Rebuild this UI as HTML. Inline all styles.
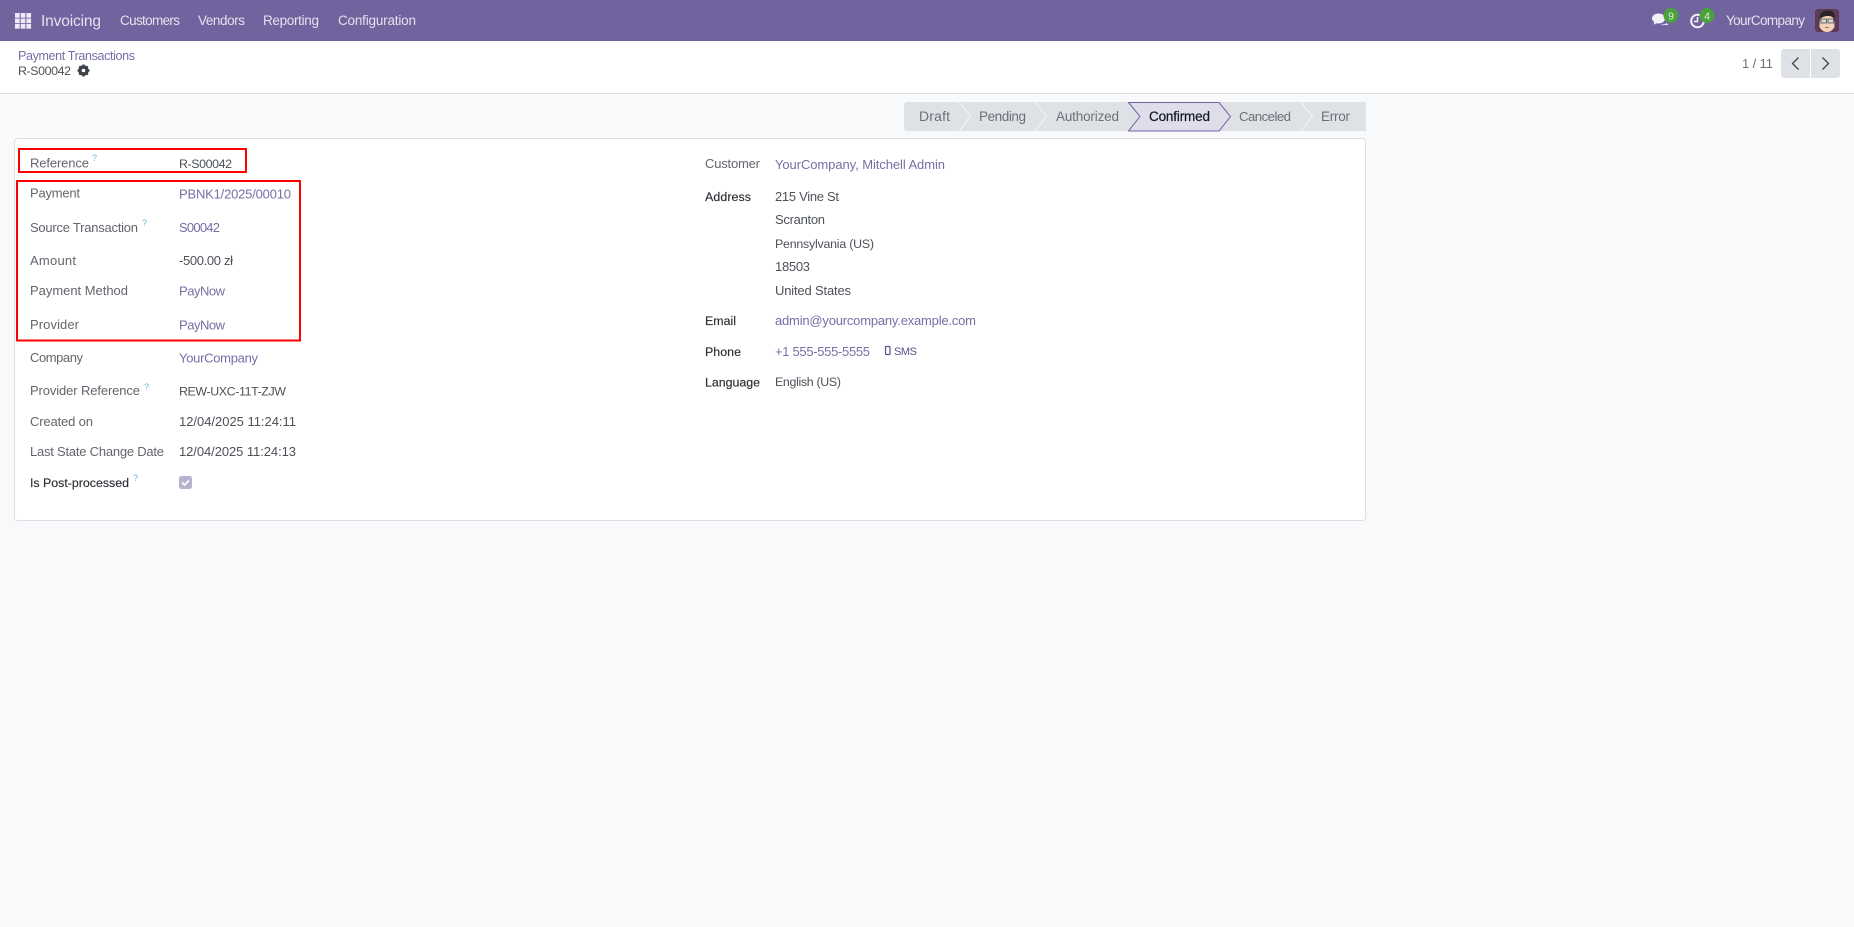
<!DOCTYPE html>
<html lang="en"><head><meta charset="utf-8"><title>R-S00042</title>
<style>
html,body{margin:0;padding:0;width:1854px;height:927px;overflow:hidden;background:#f8f9fa}
svg{display:block}
text{font-family:"Liberation Sans",sans-serif;font-size:13px}
.n{fill:#e4e1ee;font-size:13.5px}
.l{fill:#62666c}
.d{fill:#2a2e33;stroke:#2a2e33;stroke-width:.15px}
.v{fill:#4d5258}
.c{font-size:12.4px}
.a{fill:#7a6da5}
.s{fill:#6c7177}
.q{fill:#6eb4cc;font-size:9px}
</style></head><body>
<svg width="1854" height="927" viewBox="0 0 1854 927" xmlns="http://www.w3.org/2000/svg">
<rect width="1854" height="927" fill="#f8f9fa"/>
<rect width="1854" height="41" fill="#71639e"/>
<rect y="41" width="1854" height="52" fill="#fff"/>
<rect y="93" width="1854" height="1" fill="#dcdee2"/>

<!-- apps icon -->
<g fill="#eeeaf5">
<rect x="15" y="13" width="4.700" height="4.700"/><rect x="20.700" y="13" width="4.700" height="4.700"/><rect x="26.400" y="13" width="4.700" height="4.700"/>
<rect x="15" y="18.500" width="4.700" height="4.700"/><rect x="20.700" y="18.500" width="4.700" height="4.700"/><rect x="26.400" y="18.500" width="4.700" height="4.700"/>
<rect x="15" y="24" width="4.700" height="4.700"/><rect x="20.700" y="24" width="4.700" height="4.700"/><rect x="26.400" y="24" width="4.700" height="4.700"/>
</g>
<text x="41" y="26" textLength="60" style="fill:#e4e1ee;font-size:15.500px">Invoicing</text>
<text class="n" x="120" y="25" textLength="60">Customers</text>
<text class="n" x="198" y="25" textLength="47">Vendors</text>
<text class="n" x="263" y="25" textLength="56">Reporting</text>
<text class="n" x="338" y="25" textLength="78">Configuration</text>

<!-- systray -->
<path d="M1652 18.500c0-3 3-5 6.500-5s6.500 2 6.500 5-3 5-6.500 5c-.7 0-1.400-.1-2-.3l-3 1.600.8-2.800c-1.500-.9-2.300-2.100-2.300-3.500z" fill="#f3f1f8"/>
<path d="M1660 24.500c2.500.3 5 0 6.500-1.500l2 2.200-3.500-.3c-1.500.5-3.500.4-5-.4z" fill="#f3f1f8"/>
<circle cx="1671" cy="15.500" r="7.500" fill="#4aa13d"/>
<text x="1671" y="19.500" text-anchor="middle" style="fill:#dfeeda;font-size:10.500px">9</text>
<circle cx="1697.500" cy="21" r="6.300" fill="none" stroke="#f3f1f8" stroke-width="2"/>
<path d="M1697.500 17v4.500h-3.500" fill="none" stroke="#f3f1f8" stroke-width="1.500"/>
<circle cx="1707" cy="15.500" r="7.500" fill="#4aa13d"/>
<text x="1707" y="19.500" text-anchor="middle" style="fill:#dfeeda;font-size:10.500px">4</text>
<text class="n" x="1726" y="25" textLength="79">YourCompany</text>

<!-- avatar -->
<rect x="1815" y="9" width="24" height="23" rx="3" fill="#5d3a55"/>
<path d="M1819.500 27c0-9 1.500-12 7.500-12s7.500 3 7.500 12c-2 3.500-4.500 5-7.500 5s-5.500-1.500-7.500-5z" fill="#f3d2bb"/>
<path d="M1820 19c-1-5 2-8 5-8 3-1 9-1 9 3 1 2 1 3 0 5-1-2-3-3-6-3-3 0-6 1-8 3z" fill="#2a2327"/>
<rect x="1821" y="19" width="5.500" height="4" fill="#d5d8d8" stroke="#55504f" stroke-width=".8"/>
<rect x="1828" y="19" width="5.500" height="4" fill="#d5d8d8" stroke="#55504f" stroke-width=".8"/>
<path d="M1825 27.500h4" stroke="#b56b5e" stroke-width="1"/>

<!-- breadcrumb -->
<text class="a" x="18" y="60" textLength="117" style="font-size:12.500px">Payment Transactions</text>
<text class="v c" x="18" y="75" textLength="53">R-S00042</text>
<g transform="translate(83.500 70.500)">
<circle r="3.800" fill="none" stroke="#3c4148" stroke-width="2.800"/>
<g stroke="#3c4148" stroke-width="2.300"><path d="M0-6V6"/><path d="M-6 0H6"/><path d="M-4.200-4.200L4.200 4.200"/><path d="M-4.200 4.200L4.200-4.200"/></g>
<circle r="1.800" fill="#fff"/>
</g>

<!-- pager -->
<text class="s" x="1742" y="68" textLength="31" style="font-size:13px">1 / 11</text>
<path d="M1784 49h26v29h-26a3 3 0 0 1-3-3v-23a3 3 0 0 1 3-3z" fill="#dee2e6"/>
<path d="M1811 49h26a3 3 0 0 1 3 3v23a3 3 0 0 1-3 3h-26z" fill="#dee2e6"/>
<path d="M1798.500 57.500l-6 6 6 6" fill="none" stroke="#3e444b" stroke-width="1.300"/>
<path d="M1822.500 57.500l6 6-6 6" fill="none" stroke="#3e444b" stroke-width="1.300"/>

<!-- statusbar -->
<path d="M907 102h459v29H907a3 3 0 0 1-3-3v-23a3 3 0 0 1 3-3z" fill="#dee2e6"/>
<g fill="none" stroke="#f6f7f8" stroke-width="1">
<path d="M959 102l11.500 14.500L959 131"/><path d="M1035 102l11.500 14.500L1035 131"/><path d="M1301 102l11.500 14.500L1301 131"/>
</g>
<path d="M1128.500 102.500h90.500l11.500 14-11.500 14.500h-90.500l11.500-14.500z" fill="#e0ddea" stroke="#71639e" stroke-width="1"/>
<text class="s" x="919" y="121" textLength="31" style="font-size:14px">Draft</text>
<text class="s" x="979" y="121" textLength="47" style="font-size:13.500px">Pending</text>
<text class="s" x="1056" y="121" textLength="63" style="font-size:13.500px">Authorized</text>
<text x="1149" y="121" textLength="61" style="fill:#111827;stroke:#111827;stroke-width:.2px;font-size:13.500px">Confirmed</text>
<text class="s" x="1239" y="121" textLength="52" style="font-size:13.200px">Canceled</text>
<text class="s" x="1321" y="121" textLength="29" style="font-size:13.500px">Error</text>

<!-- card -->
<rect x="14.500" y="138.500" width="1351" height="382" rx="3" fill="#fff" stroke="#dcdee2"/>

<!-- left labels -->
<text class="l" x="30" y="167.500" textLength="59">Reference</text>
<text class="q" x="92" y="161">?</text>
<text class="l" x="30" y="197.500" textLength="50">Payment</text>
<text class="l" x="30" y="232" textLength="108">Source Transaction</text>
<text class="q" x="142" y="226">?</text>
<text class="l" x="30" y="265" textLength="46">Amount</text>
<text class="l" x="30" y="295" textLength="98">Payment Method</text>
<text class="l" x="30" y="329" textLength="49">Provider</text>
<text class="l" x="30" y="362" textLength="53">Company</text>
<text class="l" x="30" y="395" textLength="110">Provider Reference</text>
<text class="q" x="144" y="390">?</text>
<text class="l" x="30" y="426" textLength="63">Created on</text>
<text class="l" x="30" y="456" textLength="134">Last State Change Date</text>
<text class="d c" x="30" y="487" textLength="99">Is Post-processed</text>
<text class="q" x="133" y="481">?</text>

<!-- left values -->
<text class="v c" x="179" y="168" textLength="53">R-S00042</text>
<text class="a" x="179" y="198.500" textLength="112">PBNK1/2025/00010</text>
<text class="a" x="179" y="232" textLength="41">S00042</text>
<text class="v" x="179" y="265" textLength="54">-500.00 zł</text>
<text class="a" x="179" y="295.500" textLength="46">PayNow</text>
<text class="a" x="179" y="329.500" textLength="46">PayNow</text>
<text class="a" x="179" y="362.500" textLength="79">YourCompany</text>
<text class="v c" x="179" y="395.500" textLength="107">REW-UXC-11T-ZJW</text>
<text class="v" x="179" y="426" textLength="117">12/04/2025 11:24:11</text>
<text class="v" x="179" y="456" textLength="117">12/04/2025 11:24:13</text>
<rect x="179" y="476" width="13" height="13" rx="2.500" fill="#b8b1cf"/>
<path d="M182 482.500l2.500 2.500 4.500-4.500" fill="none" stroke="#fff" stroke-width="1.600"/>

<!-- right labels -->
<text class="l" x="705" y="168" textLength="55">Customer</text>
<text class="d c" x="705" y="201" textLength="46">Address</text>
<text class="d c" x="705" y="325" textLength="31">Email</text>
<text class="d c" x="705" y="356" textLength="36">Phone</text>
<text class="d c" x="705" y="386.500" textLength="55">Language</text>

<!-- right values -->
<text class="a" x="775" y="169" textLength="170">YourCompany, Mitchell Admin</text>
<text class="v" x="775" y="201" textLength="64">215 Vine St</text>
<text class="v" x="775" y="224" textLength="50">Scranton</text>
<text class="v c" x="775" y="248" textLength="99">Pennsylvania (US)</text>
<text class="v" x="775" y="271" textLength="35">18503</text>
<text class="v" x="775" y="295" textLength="76">United States</text>
<text class="a" x="775" y="325" textLength="201">admin@yourcompany.example.com</text>
<text class="a" x="775" y="356" textLength="95">+1 555-555-5555</text>
<rect x="885.500" y="346.500" width="4.500" height="8" rx=".8" fill="none" stroke="#5a4f85" stroke-width="1.200"/>
<text x="894" y="355" textLength="23" style="fill:#5a4f85;font-size:11px">SMS</text>
<text class="v c" x="775" y="386" textLength="66">English (US)</text>

<!-- red annotation boxes -->
<rect x="19" y="149" width="227" height="23" fill="none" stroke="#ff0000" stroke-width="2"/>
<rect x="17" y="181" width="283" height="159.500" fill="none" stroke="#ff0000" stroke-width="2"/>
</svg>
</body></html>
